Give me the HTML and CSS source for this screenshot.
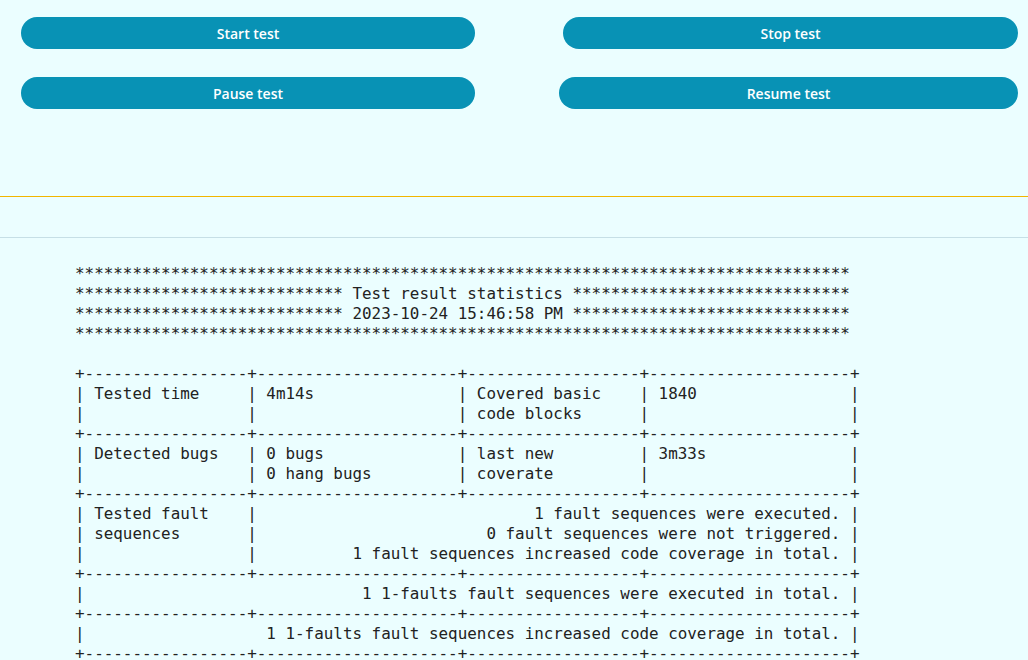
FILE: index.html
```html
<!DOCTYPE html>
<html>
<head>
<meta charset="utf-8">
<link rel="stylesheet" href="styles.css">
</head>
<body>
<header class="controls">
  <div class="btn-row">
    <button class="btn btn-start">Start test</button>
    <button class="btn btn-stop">Stop test</button>
  </div>
  <div class="btn-row">
    <button class="btn btn-pause">Pause test</button>
    <button class="btn btn-resume">Resume test</button>
  </div>
</header>
<div class="rule-accent"></div>
<div class="spacer"></div>
<main class="report">
<pre class="stats">*********************************************************************************
**************************** Test result statistics *****************************
**************************** 2023-10-24 15:46:58 PM *****************************
*********************************************************************************

+-----------------+---------------------+------------------+---------------------+
| Tested time     | 4m14s               | Covered basic    | 1840                |
|                 |                     | code blocks      |                     |
+-----------------+---------------------+------------------+---------------------+
| Detected bugs   | 0 bugs              | last new         | 3m33s               |
|                 | 0 hang bugs         | coverate         |                     |
+-----------------+---------------------+------------------+---------------------+
| Tested fault    |                             1 fault sequences were executed. |
| sequences       |                        0 fault sequences were not triggered. |
|                 |          1 fault sequences increased code coverage in total. |
+-----------------+---------------------+------------------+---------------------+
|                             1 1-faults fault sequences were executed in total. |
+-----------------+---------------------+------------------+---------------------+
|                   1 1-faults fault sequences increased code coverage in total. |
+-----------------+---------------------+------------------+---------------------+</pre>
</main>
</body>
</html>
```
FILE: styles.css
```css
html, body {
  margin: 0;
  padding: 0;
  background: #ebfeff;
}
body {
  font-family: "Open Sans", "Noto Sans", sans-serif;
}
.controls {
  height: 196px;
  box-sizing: border-box;
  padding: 17px 10px 0 21px;
  display: flex;
  flex-direction: column;
  gap: 28px;
}
.rule-accent {
  height: 1px;
  background: #f2b600;
}
.btn-row {
  display: flex;
  justify-content: space-between;
}
.btn {
  height: 32px;
  border: none;
  border-radius: 16px;
  background: #0892b5;
  color: #ffffff;
  font-family: "Open Sans", "Noto Sans", sans-serif;
  font-size: 14px;
  font-weight: 600;
  padding: 0;
  cursor: pointer;
}
.btn-start, .btn-pause { width: 454px; }
.btn-stop { width: 455px; }
.btn-resume { width: 459px; }
.spacer {
  height: 40px;
  border-bottom: 1px solid #c6dfe6;
}
.report {
  padding: 26px 0 0 75px;
}
.stats {
  margin: 0;
  font-family: "DejaVu Sans Mono", "Liberation Mono", monospace;
  font-size: 15.9px;
  line-height: 20px;
  color: #222222;
}
```
